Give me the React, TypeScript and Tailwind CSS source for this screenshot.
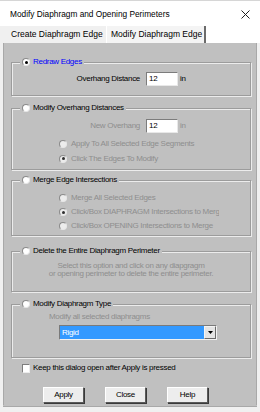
import React from 'react';

const body = "font-['Liberation_Sans',Arial,sans-serif] text-[8px] tracking-[-0.3px] leading-none";

const Radio = ({ on, disabled }: { on?: boolean; disabled?: boolean }) => (
  <span
    className={`flex h-[8px] w-[8px] shrink-0 items-center justify-center rounded-full border border-[#8a8a8a] border-b-[#e6e6e6] border-r-[#e6e6e6] ${
      disabled ? 'bg-[#ececec]' : 'bg-white'
    }`}
  >
    {on && <span className={`h-[3px] w-[3px] rounded-full ${disabled ? 'bg-[#303030]' : 'bg-black'}`} />}
  </span>
);

const Group = ({
  title,
  on,
  blue,
  className,
  children,
}: {
  title: string;
  on?: boolean;
  blue?: boolean;
  className: string;
  children?: React.ReactNode;
}) => (
  <div
    className={`relative ml-[7px] w-[240px] border border-[#9c9c9c] shadow-[1px_1px_0_#ececec,inset_1px_1px_0_#ececec] ${className}`}
  >
    <div className="absolute -top-[6px] left-[8px] flex h-[10px] items-center gap-[3px] bg-[#c0c0c0] pl-[2px] pr-[2px]">
      <Radio on={on} />
      <span className={`${body} ${blue ? 'text-[#0000ff]' : 'text-black'}`}>{title}</span>
    </div>
    {children}
  </div>
);

const Field = () => (
  <span className="flex h-[14px] w-[32px] items-center border border-[#7c7c7c] border-b-[#e8e8e8] border-r-[#e8e8e8] bg-white pl-[2px]">
    <span className={`${body} text-black`}>12</span>
  </span>
);

// option rows are clipped at the control's width, like the original dialog
const Option = ({ label, on, h }: { label: string; on?: boolean; h: string }) => (
  <div className={`ml-[47px] flex w-[160px] items-center gap-[4px] overflow-hidden ${h}`}>
    <Radio on={on} disabled />
    <span className={`${body} whitespace-nowrap text-[#8e8e8e]`}>{label}</span>
  </div>
);

const Button = ({ label }: { label: string }) => (
  <button className="flex h-[16px] w-[41px] items-center justify-center border border-[#5a5a5a] border-l-white border-t-white bg-[#ededed] shadow-[1px_1px_0_#3a3a3a]">
    <span className={`${body} text-black`}>{label}</span>
  </button>
);

export default function App() {
  return (
    <div className="flex h-[412px] w-[260px] flex-col bg-[#f0f0f0] font-['Liberation_Sans',Arial,sans-serif]">
      {/* title bar */}
      <div className="flex h-[26px] items-center justify-between border-t border-[#d6d6d6] bg-white pl-[10px] pr-[10px]">
        <span className="pt-[2px] text-[8.3px] text-black">Modify Diaphragm and Opening Perimeters</span>
        <svg width="9" height="9" viewBox="0 0 9 9" className="mt-[1px]">
          <path d="M0.5 0.5L8.5 8.5M8.5 0.5L0.5 8.5" stroke="#1e1e1e" strokeWidth="1" />
        </svg>
      </div>

      {/* tabs */}
      <div className="flex h-[17px] items-stretch bg-white">
        <div className="flex w-[106px] items-center bg-[#f0f0f0] pl-[11px] text-[8.5px] text-black">Create Diaphragm Edge</div>
        <div className="flex w-[100px] items-center border-l border-r-2 border-l-white border-r-[#6b6b6b] bg-[#f4f4f4] pl-[4px] text-[8.5px] text-black">
          Modify Diaphragm Edge
        </div>
      </div>

      {/* dialog body */}
      <div className="mx-[3px] flex h-[362px] flex-col border-l border-r border-[#a8a8a8] bg-[#c0c0c0]">
        <Group title="Redraw Edges" on blue className="mt-[19px] h-[34px]">
          <div className="flex items-center pt-[9px]">
            <span className={`${body} w-[128px] text-right text-black`}>Overhang Distance</span>
            <span className="ml-[6px]">
              <Field />
            </span>
            <span className={`${body} ml-[2px] text-black`}>in</span>
          </div>
        </Group>

        <Group title="Modify Overhang Distances" className="mt-[12px] h-[62px]">
          <div className="flex items-center pt-[10px]">
            <span className={`${body} w-[128px] text-right text-[#8e8e8e]`}>New Overhang</span>
            <span className="ml-[6px]">
              <Field />
            </span>
            <span className={`${body} ml-[2px] text-[#8e8e8e]`}>in</span>
          </div>
          <div className="mt-[3px]">
            <Option label="Apply To All Selected Edge Segments" h="h-[15px]" />
            <Option label="Click The Edges To Modify" on h="h-[15px]" />
          </div>
        </Group>

        <Group title="Merge Edge Intersections" className="mt-[10px] h-[56px]">
          <div className="pt-[10px]">
            <Option label="Merge All Selected Edges" h="h-[14px]" />
            <Option label="Click/Box DIAPHRAGM Intersections to Merge" on h="h-[14px]" />
            <Option label="Click/Box OPENING Intersections to Merge" h="h-[14px]" />
          </div>
        </Group>

        <Group title="Delete the Entire Diaphragm Perimeter" className="mt-[15px] h-[41px]">
          <div className={`${body} pt-[10px] text-center leading-[12px] text-[#8e8e8e]`}>
            <div>Select this option and click on any diapgragm</div>
            <div>or opening perimeter to delete the entire perimeter.</div>
          </div>
        </Group>

        <Group title="Modify Diaphragm Type" className="mt-[12px] h-[54px]">
          <div className={`${body} h-[12px] pl-[37px] pt-[8px] text-[#8e8e8e]`}>Modify all selected diaphragms</div>
          <div className="ml-[47px] mt-[8px] flex h-[15px] w-[158px] border border-[#7a7a7a] border-b-[#f2f2f2] border-r-[#f2f2f2]">
            <div className="flex flex-1 items-center bg-[#3399ff] pl-[2px]">
              <span className={`${body} text-white`}>Rigid</span>
            </div>
            <div className="flex w-[12px] items-center justify-center border border-[#f4f4f4] border-b-[#6a6a6a] border-r-[#6a6a6a] bg-[#e4e4e4]">
              <svg width="5" height="3" viewBox="0 0 5 3">
                <path d="M0 0H5L2.5 3Z" fill="#000" />
              </svg>
            </div>
          </div>
        </Group>

        <div className="ml-[18px] mt-[5px] flex h-[10px] items-center gap-[3px]">
          <span className="h-[9px] w-[8px] border border-[#7c7c7c] border-b-[#ececec] border-r-[#ececec] bg-white" />
          <span className={`${body} text-black`}>Keep this dialog open after Apply is pressed</span>
        </div>

        <div className="ml-[39px] mt-[14px] flex gap-[21px]">
          <Button label="Apply" />
          <Button label="Close" />
          <Button label="Help" />
        </div>
      </div>
      <div className="mx-[3px] h-[2px] border-b border-[#a8a8a8] bg-[#c0c0c0]" />
    </div>
  );
}
